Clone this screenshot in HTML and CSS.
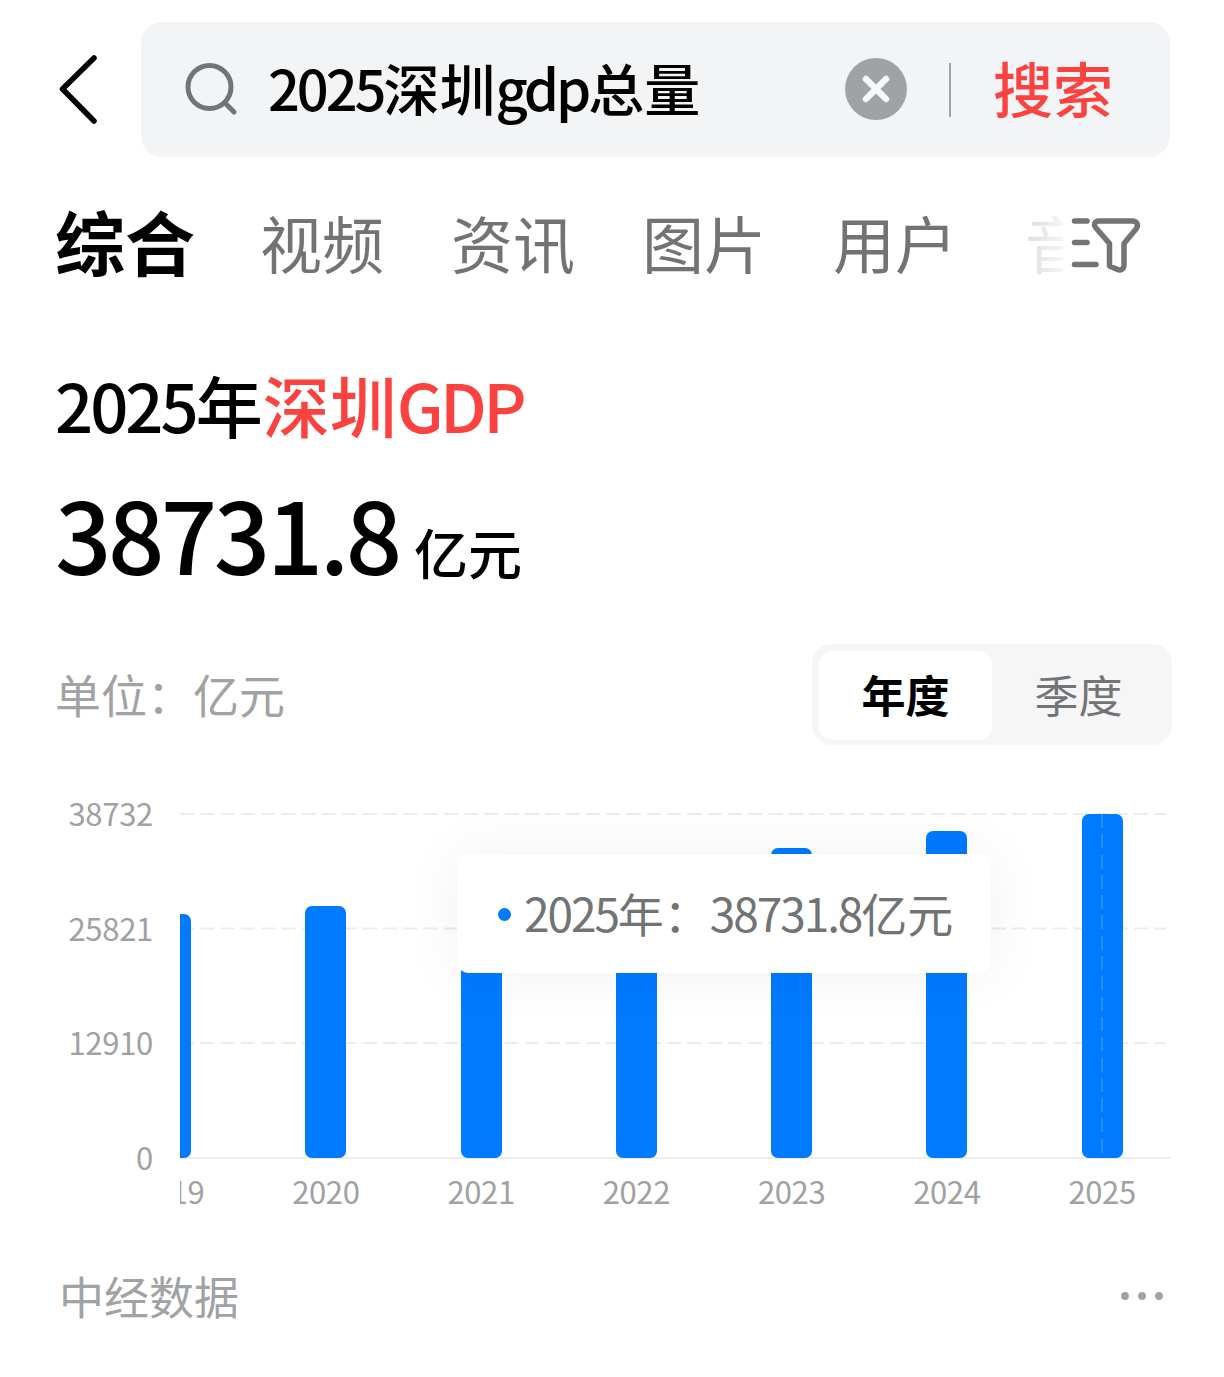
FILE: index.html
```html
<!DOCTYPE html>
<html lang="zh-CN">
  <head>
    <meta charset="UTF-8" />
    <meta name="viewport" content="width=device-width, initial-scale=1.0" />
    <title>2025深圳gdp总量</title>
    <link rel="stylesheet" href="styles.css">
  </head>
  <body>
    <header class="header">
      <svg class="back" width="44" height="76" viewBox="0 0 44 76">
        <path d="M38 6 L6.500 37 L38 69" />
      </svg>
      <div class="search-box">
        <svg class="search-icon" width="56" height="56" viewBox="0 0 56 56">
          <circle cx="25.500" cy="25" r="21.500" />
          <path d="M41 41 L50 50" />
        </svg>
        <div class="query"><span class="num">2025</span>深圳<span class="latin">gdp</span>总量</div>
        <svg class="clear" width="62" height="62" viewBox="0 0 62 62">
          <circle cx="31" cy="31" r="31" />
          <path d="M21 21 L41 41 M41 21 L21 41" />
        </svg>
        <div class="divider"></div>
        <div class="search-btn">搜索</div>
      </div>
    </header>

    <nav class="tabs">
      <div class="tab active">综合</div>
      <div class="tab">视频</div>
      <div class="tab">资讯</div>
      <div class="tab">图片</div>
      <div class="tab">用户</div>
      <div class="tab cut">音</div>
      <svg class="filter" width="70" height="58" viewBox="0 0 70 58">
        <path d="M3.500 5 H16 M3.500 26.500 H16 M3.500 48.500 H25" />
        <path d="M28 5 H61 C66 5 68 9 65 13 L53 27.500 V49 C53 53 50 55 46.500 53.500 L38.500 50 V27.500 L25 12 C22 8.500 24 5 28 5 Z" />
      </svg>
    </nav>

    <main class="card">
      <h1 class="title"><span class="num">2025</span>年<em>深圳<span class="latin">GDP</span></em></h1>
      <div class="value"><span class="amount">38731.8</span><span class="unit">亿元</span></div>

      <div class="toolbar">
        <div class="label">单位：亿元</div>
        <div class="switch">
          <div class="option on">年度</div>
          <div class="option">季度</div>
        </div>
      </div>

      <div class="chart">
        <div class="y-axis">
          <span>38732</span>
          <span>25821</span>
          <span>12910</span>
          <span>0</span>
        </div>
        <div class="plot">
          <svg class="grid" width="991" height="346" viewBox="0 0 991 346">
            <path class="dash" d="M0 1 H986 M0 115.500 H986 M0 230 H986" />
            <path d="M0 345 H991" />
          </svg>
          <div class="bars">
            <div class="slot"><div class="bar" style="height: 244px"></div><span>2019</span></div>
            <div class="slot"><div class="bar" style="height: 252px"></div><span>2020</span></div>
            <div class="slot"><div class="bar" style="height: 273px"></div><span>2021</span></div>
            <div class="slot"><div class="bar" style="height: 288px"></div><span>2022</span></div>
            <div class="slot"><div class="bar" style="height: 310px"></div><span>2023</span></div>
            <div class="slot"><div class="bar" style="height: 327px"></div><span>2024</span></div>
            <div class="slot"><div class="bar current" style="height: 344px"></div><span>2025</span></div>
          </div>
        </div>
        <div class="tooltip">
          <i class="dot"></i>
          <div class="tip-text"><span class="num">2025</span>年：<span class="num">38731.8</span>亿元</div>
        </div>
      </div>

      <footer class="footer">
        <div class="source">中经数据</div>
        <svg class="more" width="44" height="10" viewBox="0 0 44 10">
          <circle cx="5" cy="5" r="3.900" />
          <circle cx="22" cy="5" r="3.900" />
          <circle cx="39" cy="5" r="3.900" />
        </svg>
      </footer>
    </main>
  </body>
</html>
```
FILE: styles.css
```css
* {
  box-sizing: border-box;
}
body {
  margin: 0;
  height: 1377px;
  overflow: hidden;
  background: #fff;
  color: #000;
  font-family: "Noto Sans CJK SC", sans-serif;
  white-space: nowrap;
}
svg {
  flex: none;
  fill: none;
  stroke-linecap: round;
  stroke-linejoin: round;
}
.num {
  letter-spacing: -0.045em;
}
.latin {
  letter-spacing: -0.055em;
}

/* search header */
.header {
  display: flex;
  align-items: center;
  padding: 22px 54px 0 56px;
}
.back {
  stroke: #000;
  stroke-width: 5.5;
}
.search-box {
  display: flex;
  align-items: center;
  width: 1029px;
  height: 135px;
  margin-left: 41px;
  padding-left: 43px;
  border-radius: 21px;
  background: #f3f4f6;
}
.search-icon {
  stroke: #737477;
  stroke-width: 5;
}
.query {
  width: 577px;
  margin-left: 28px;
  padding-bottom: 6px;
  font-size: 56px;
  font-weight: 500;
  line-height: 80px;
}
.query .num {
  letter-spacing: -0.055em;
}
.clear {
  margin-top: -1px;
}
.clear circle {
  fill: #a1a2a5;
}
.clear path {
  stroke: #f6f7f9;
  stroke-width: 6.5;
}
.divider {
  width: 2px;
  height: 54px;
  margin: 0 42px;
  background: #a1a2a5;
}
.search-btn {
  padding-bottom: 6px;
  color: #fa4340;
  font-size: 60px;
  font-weight: 500;
  line-height: 80px;
}

/* tabs */
.tabs {
  display: flex;
  align-items: center;
  height: 100px;
  margin-top: 38px;
  padding-left: 55px;
}
.tab {
  width: 191px;
  padding-bottom: 6px;
  color: #727375;
  font-size: 62px;
}
.tab.active {
  width: 205px;
  padding-bottom: 10px;
  color: #000;
  font-size: 70px;
  font-weight: 700;
}
.tab.cut {
  width: 38px;
  margin-left: 1px;
  overflow: hidden;
  background: linear-gradient(90deg, #ddd, #f5f5f5);
  background-clip: text;
  -webkit-background-clip: text;
  color: transparent;
}
.filter {
  margin-left: 8px;
  stroke: #747477;
  stroke-width: 5.5;
}

/* gdp card */
.card {
  padding: 69px 52px 0 55px;
}
.title {
  margin: 0;
  font-size: 67px;
  font-weight: 500;
  line-height: 80px;
}
.title em {
  color: #fa4340;
  font-style: normal;
}
.value {
  display: flex;
  align-items: baseline;
  height: 110px;
  margin-top: 33px;
  line-height: 110px;
}
.amount {
  width: 359px;
  font-size: 99px;
  font-weight: 500;
  letter-spacing: -3.5px;
}
.unit {
  font-size: 54px;
  font-weight: 500;
}
.toolbar {
  display: flex;
  align-items: center;
  justify-content: space-between;
  margin-top: 57px;
}
.label {
  padding-bottom: 3px;
  color: #a1a2a4;
  font-size: 46px;
}
.switch {
  display: flex;
  width: 360px;
  height: 101px;
  padding: 7px 6px 5px 7px;
  border-radius: 20px;
  background: #f6f6f7;
}
.option {
  width: 173px;
  border-radius: 14px;
  color: #737477;
  font-size: 44px;
  line-height: 86px;
  text-align: center;
}
.option.on {
  background: #fff;
  color: #000;
  font-weight: 700;
}

/* chart */
.chart {
  position: relative;
  display: flex;
  height: 405px;
  margin-top: 68px;
  color: #a1a1a3;
  font-size: 31px;
}
.y-axis {
  display: flex;
  flex-direction: column;
  justify-content: space-between;
  width: 98px;
  height: 384px;
  margin-top: -20px;
  line-height: 40px;
  text-align: right;
  letter-spacing: -0.3px;
}
.plot {
  position: relative;
  width: 991px;
  height: 405px;
  margin-left: 27px;
  overflow: hidden;
}
.grid {
  position: absolute;
  top: 0;
  left: 0;
  stroke: #ececee;
  stroke-width: 2;
  stroke-linecap: butt;
}
.grid .dash {
  stroke-dasharray: 14 6.3;
}
.bars {
  position: relative;
  display: flex;
  align-items: flex-end;
  width: 1087px;
  height: 398px;
  margin-left: -87px;
}
.slot {
  flex: none;
  display: flex;
  flex-direction: column;
  align-items: center;
  width: 155.25px;
  line-height: 40px;
  letter-spacing: -0.4px;
}
.bar {
  width: 41px;
  margin-bottom: 13px;
  border-radius: 7px;
  background: #007aff;
}
.bar.current {
  background: repeating-linear-gradient(180deg, #2a90ff 0 14px, #007aff 14px 20.3px) center / 2px 100% no-repeat #007aff;
}
.tooltip {
  position: absolute;
  top: 41px;
  left: 402px;
  display: flex;
  align-items: center;
  width: 534px;
  height: 119px;
  padding-left: 41px;
  border-radius: 12px;
  background: #fff;
  box-shadow: 0 0 60px rgba(0, 0, 0, 0.06);
  color: #727375;
  font-size: 46px;
}
.tip-text {
  padding-bottom: 3px;
}
.dot {
  width: 13px;
  height: 13px;
  margin: 2px 13px 0 0;
  border-radius: 50%;
  background: #007aff;
}

.footer {
  display: flex;
  align-items: center;
  justify-content: space-between;
  margin-top: 45px;
  padding: 0 8px 0 4px;
  color: #a1a2a4;
  font-size: 45px;
}
.more {
  margin-top: 1px;
  fill: #a1a2a4;
}
```
